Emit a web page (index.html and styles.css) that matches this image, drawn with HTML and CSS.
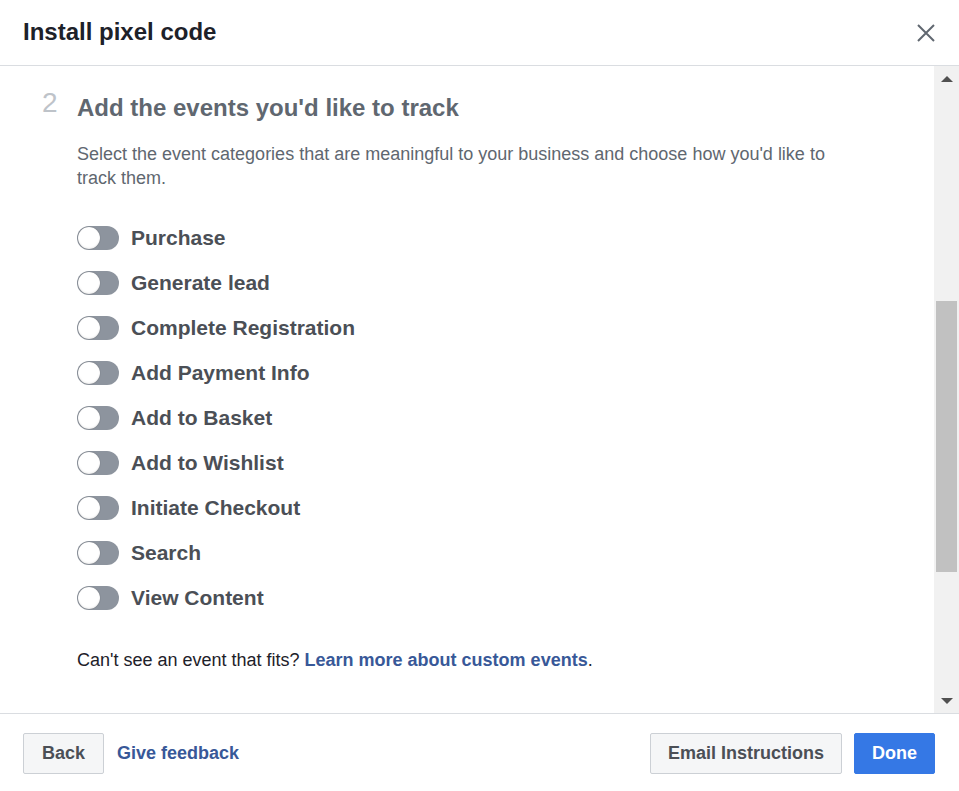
FILE: index.html
```html
<!DOCTYPE html>
<html lang="en">
<head>
  <meta charset="UTF-8" />
  <title>Install pixel code</title>
  <meta name="viewport" content="width=device-width, initial-scale=1.0" />
  <link rel="stylesheet" href="styles.css">
</head>
<body>
  <div class="dialog">
    <header class="dialog-header">
      <h1>Install pixel code</h1>
      <button class="close" aria-label="Close">
        <svg width="18" height="18" viewBox="0 0 18 18">
          <path d="M1 1 L17 17 M17 1 L1 17" stroke="#606770" stroke-width="2" fill="none" />
        </svg>
      </button>
    </header>

    <div class="dialog-body">
      <div class="scroll-content">
        <div class="step">
          <div class="step-title">
            <span class="step-number">2</span>
            <h2>Add the events you'd like to track</h2>
          </div>
          <p class="step-desc">Select the event categories that are meaningful to your business and choose how you'd like to track them.</p>

          <ul class="events">
            <li><span class="toggle"></span>Purchase</li>
            <li><span class="toggle"></span>Generate lead</li>
            <li><span class="toggle"></span>Complete Registration</li>
            <li><span class="toggle"></span>Add Payment Info</li>
            <li><span class="toggle"></span>Add to Basket</li>
            <li><span class="toggle"></span>Add to Wishlist</li>
            <li><span class="toggle"></span>Initiate Checkout</li>
            <li><span class="toggle"></span>Search</li>
            <li><span class="toggle"></span>View Content</li>
          </ul>

          <p class="custom-note">Can't see an event that fits? <a href="#">Learn more about custom events</a>.</p>
        </div>
      </div>

      <div class="scrollbar">
        <div class="scroll-btn"><span class="arrow up"></span></div>
        <div class="scroll-track">
          <div class="scroll-thumb"></div>
        </div>
        <div class="scroll-btn"><span class="arrow down"></span></div>
      </div>
    </div>

    <footer class="dialog-footer">
      <div class="footer-left">
        <a href="#" class="btn">Back</a>
        <a href="#" class="link">Give feedback</a>
      </div>
      <div class="footer-right">
        <a href="#" class="btn narrow">Email Instructions</a>
        <a href="#" class="btn narrow primary">Done</a>
      </div>
    </footer>
  </div>
</body>
</html>
```

FILE: styles.css
```css
* {
  box-sizing: border-box;
}

body {
  margin: 0;
  padding: 0;
  background-color: #fff;
  font-family: "Liberation Sans", Arial, sans-serif;
  color: #1d2129;
}

.dialog {
  width: 959px;
  height: 791px;
  display: flex;
  flex-direction: column;
  background: #fff;
}

.dialog-header {
  height: 66px;
  flex-shrink: 0;
  padding: 0 24px 0 23px;
  border-bottom: 1px solid #dadde1;
  display: flex;
  justify-content: space-between;
  align-items: center;
}

.dialog-header h1 {
  margin: 0 0 2px;
  font-size: 24px;
  line-height: 28px;
  font-weight: bold;
  color: #1d2129;
}

.close {
  border: none;
  background: none;
  padding: 0;
  width: 18px;
  height: 18px;
  cursor: pointer;
  display: block;
}

.close svg {
  display: block;
}

.dialog-body {
  height: 647px;
  flex-shrink: 0;
  display: flex;
}

.scroll-content {
  flex: 1;
  overflow: hidden;
  padding: 28px 0 0 40px;
}

.step-title {
  display: flex;
  align-items: flex-start;
}

.step-number {
  width: 37px;
  padding-left: 2px;
  margin-top: -5px;
  font-size: 28px;
  line-height: 28px;
  color: #bec3c9;
}

.step-title h2 {
  margin: 0;
  font-size: 24px;
  line-height: 28px;
  font-weight: bold;
  color: #606770;
}

.step-desc {
  margin: 20px 0 0 37px;
  max-width: 790px;
  font-size: 18px;
  line-height: 24px;
  color: #606770;
}

.events {
  list-style: none;
  margin: 36px 0 0 37px;
  padding: 0;
  display: flex;
  flex-direction: column;
  gap: 21px;
}

.events li {
  display: flex;
  align-items: center;
  height: 24px;
  font-size: 21px;
  font-weight: bold;
  color: #4b4f56;
}

.toggle {
  width: 42px;
  height: 24px;
  margin-right: 12px;
  border-radius: 12px;
  background: #8d949e;
  padding: 0 1px;
  display: flex;
  align-items: center;
  flex-shrink: 0;
}

.toggle::before {
  content: "";
  width: 22px;
  height: 22px;
  border-radius: 50%;
  background: #fff;
  box-shadow: 0 0 1px rgba(0,0,0,0.45), inset 0 -1px 2px rgba(0,0,0,0.08);
}

.custom-note {
  margin: 38px 0 0 37px;
  font-size: 18px;
  line-height: 24px;
  color: #1d2129;
}

.custom-note a,
.link {
  color: #385898;
  font-weight: bold;
  text-decoration: none;
}

.scrollbar {
  width: 25px;
  flex-shrink: 0;
  background: #f1f1f1;
  display: flex;
  flex-direction: column;
}

.scroll-btn {
  height: 25px;
  display: flex;
  align-items: center;
  justify-content: center;
}

.arrow {
  width: 0;
  height: 0;
  border-left: 6px solid transparent;
  border-right: 6px solid transparent;
}

.arrow.up {
  border-bottom: 6px solid #505050;
}

.arrow.down {
  border-top: 6px solid #505050;
}

.scroll-track {
  flex: 1;
  padding: 0 2px;
}

.scroll-thumb {
  margin-top: 210px;
  height: 271px;
  background: #c1c1c1;
}

.dialog-footer {
  flex: 1;
  border-top: 1px solid #dadde1;
  padding: 19px 24px 0 23px;
  display: flex;
  justify-content: space-between;
  align-items: flex-start;
}

.footer-left,
.footer-right {
  display: flex;
  align-items: center;
}

.footer-left {
  gap: 13px;
}

.footer-right {
  gap: 12px;
}

.btn {
  display: inline-block;
  height: 41px;
  line-height: 39px;
  padding: 0 18px;
  border: 1px solid #ccd0d5;
  border-radius: 2px;
  background: #f5f6f7;
  color: #4b4f56;
  font-size: 18px;
  font-weight: bold;
  text-decoration: none;
}

.btn.narrow {
  padding: 0 17px;
}

.btn.primary {
  background: #3578e5;
  border-color: #3578e5;
  color: #fff;
}

.link {
  font-size: 18px;
}
```
